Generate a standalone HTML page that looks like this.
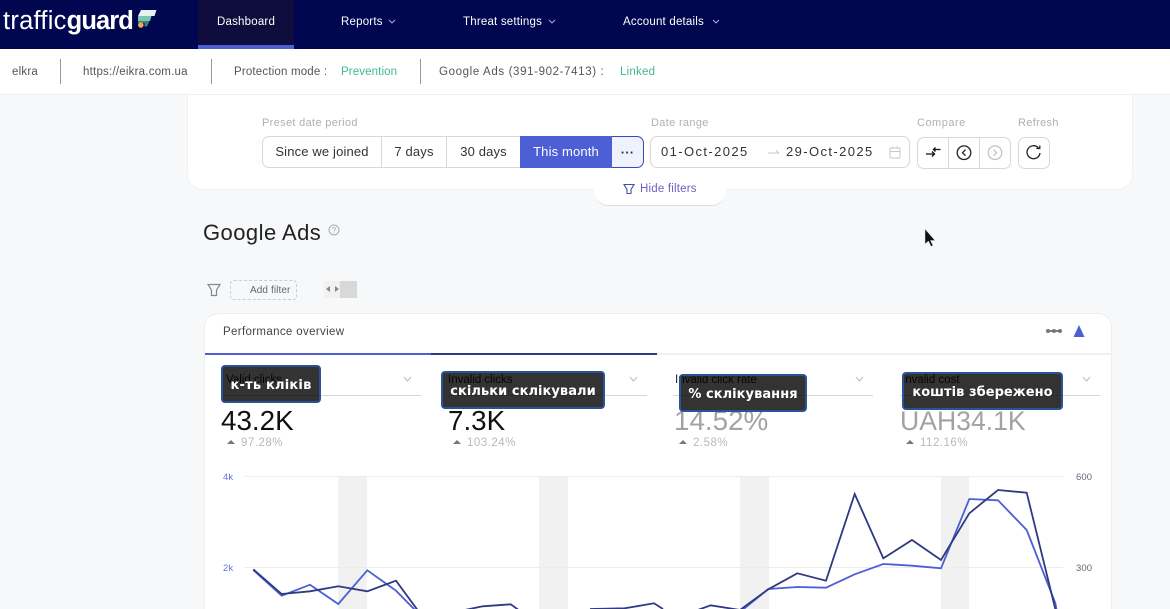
<!DOCTYPE html>
<html><head><meta charset="utf-8">
<style>
html,body{margin:0;padding:0;width:1170px;height:609px;overflow:hidden;background:#f7f8fa;font-family:"Liberation Sans",sans-serif}
#root{position:relative;width:1170px;height:609px;overflow:hidden;background:#f7f8fa}
.a{position:absolute;white-space:nowrap}
.t{position:absolute;white-space:nowrap;line-height:16px}
.nav{color:#fff;font-size:11.5px;top:14px;letter-spacing:.2px}
.sub{font-size:11.5px;color:#555;top:64px;letter-spacing:.22px}
.grn{color:#3fb88f}
.vs{position:absolute;top:59px;width:1px;height:25px;background:#999}
.lbl{font-size:11px;color:#b0b0b0;top:115px;letter-spacing:.33px}
.btn{position:absolute;top:136px;height:32px;box-sizing:border-box;border:1px solid #d8d8d8;background:#fff;font-size:13px;color:#333;line-height:30px;text-align:center;letter-spacing:.15px}
.tip{position:absolute;box-sizing:border-box;background:rgba(0,0,0,.8);border:2px solid #2a5298;border-radius:4px;color:#fff;font:bold 13px "DejaVu Sans",sans-serif;letter-spacing:.05px;text-align:center;line-height:37px;white-space:nowrap;height:38px}
.ml{font-size:11.5px;color:#222;top:372px}
.hr{position:absolute;top:395px;height:1px;background:#d5d5d5}
.val{font-size:27.8px;line-height:30px;top:406px;color:#111}
.pct{font-size:11.5px;color:#b8b8c0;top:435px;letter-spacing:.5px}
.tri{position:absolute;top:440px;width:0;height:0;border-left:4px solid transparent;border-right:4px solid transparent;border-bottom:4px solid #777}
.ax{font-size:9.5px;line-height:12px;letter-spacing:.1px}
</style></head><body><div id="root">
<div class="a" style="left:0;top:0;width:1170px;height:49px;background:#000650"></div>
<div class="a" style="left:198px;top:0;width:96px;height:45px;background:#0e0d3d"></div>
<div class="a" style="left:198px;top:45px;width:96px;height:4px;background:#4c5fd5"></div>
<div class="t" style="left:3px;top:7px;line-height:28px;font-size:25.5px;color:#fff;letter-spacing:.25px">traffic<b style="letter-spacing:-.9px">guard</b></div>
<svg class="a" style="left:136px;top:9px" width="22" height="22" viewBox="0 0 22 22">
<path d="M5 1H20.500L18.500 7H2Z" fill="#e8f0f0"/><path d="M2 7H15.500L14 12H2Z" fill="#7cc6b0"/><path d="M2 12H13.500L11 17.500H8.500V14H2Z" fill="#3f7f80"/><circle cx="4.800" cy="16" r="2.800" fill="#f4a64a"/></svg>
<div class="t nav" style="left:217px">Dashboard</div>
<div class="t nav" style="left:341px">Reports</div>
<div class="t nav" style="left:463px">Threat settings</div>
<div class="t nav" style="left:623px">Account details</div>
<svg class="a" style="left:0;top:0" width="1170" height="49" fill="none" stroke="#b8bbd8" stroke-width=".9"><path d="M389 20l3 3 3-3M549 20l3 3 3-3M713 20l3 3 3-3"/></svg>

<div class="a" style="left:0;top:49px;width:1170px;height:46px;background:#fff;border-bottom:1px solid #f0f0f0;box-sizing:border-box"></div>
<div class="t sub" style="left:12px">elkra</div><div class="vs" style="left:60px"></div>
<div class="t sub" style="left:83px">https://eikra.com.ua</div><div class="vs" style="left:211px"></div>
<div class="t sub" style="left:234px;letter-spacing:.18px">Protection mode :</div><div class="t sub grn" style="left:341px;letter-spacing:.12px">Prevention</div><div class="vs" style="left:420px"></div>
<div class="t sub" style="left:439px;letter-spacing:.63px">Google Ads (391-902-7413) :</div><div class="t sub grn" style="left:620px">Linked</div>

<div class="a" style="left:187px;top:95px;width:946px;height:95px;box-sizing:border-box;background:#fff;border:1px solid #f0f0f2;border-top:0;border-radius:0 0 16px 16px"></div>
<div class="t lbl" style="left:262px">Preset date period</div>
<div class="btn" style="left:262px;width:120px;border-radius:7px 0 0 7px">Since we joined</div>
<div class="btn" style="left:382px;width:65px;border-left:0">7 days</div>
<div class="btn" style="left:447px;width:73px;border-left:0;border-right:0">30 days</div>
<div class="btn" style="left:520px;width:92px;background:#4c5fd5;border-color:#4c5fd5;color:#fff">This month</div>
<div class="btn" style="left:612px;width:32px;background:#eef2fd;border-color:#3a4ab5;border-left:0;border-radius:0 7px 7px 0;line-height:32px;font-weight:bold">···</div>

<div class="t lbl" style="left:651px">Date range</div>
<div class="btn" style="left:650px;width:260px;border-radius:7px"></div>
<div class="t" style="left:661px;top:144px;font-size:13px;color:#333;letter-spacing:1.4px">01-Oct-2025</div>
<div class="t" style="left:786px;top:144px;font-size:13px;color:#333;letter-spacing:1.4px">29-Oct-2025</div>
<svg class="a" style="left:765px;top:145px" width="150" height="16" fill="none" stroke="#c8c8c8"><path d="M3 8H14M11 5.500L14 8"/><rect x="125" y="3" width="10" height="10" rx="1"/><path d="M125 6.500H135M127.500 1.500V4M132.500 1.500V4"/></svg>

<div class="t lbl" style="left:917px;letter-spacing:.5px">Compare</div>
<div class="btn" style="left:917px;width:94px;top:137px;border-radius:7px"></div>
<div class="a" style="left:948px;top:138px;width:1px;height:30px;background:#d8d8d8"></div>
<div class="a" style="left:979px;top:138px;width:1px;height:30px;background:#d8d8d8"></div>
<svg class="a" style="left:917px;top:137px" width="94" height="32" fill="none" stroke-width="1.300">
<path d="M9 17H17.500M15 14.500L17.500 17 15 19.500M23.500 12.500H16.500M18.500 10.500L16.500 12.500 18.500 14.500" stroke="#111"/>
<circle cx="47" cy="15.700" r="6.800" stroke="#222"/><path d="M48.500 12.700L45.500 15.700 48.500 18.700" stroke="#222"/>
<circle cx="78" cy="15.700" r="6.800" stroke="#c4c4c4"/><path d="M76.500 12.700L79.500 15.700 76.500 18.700" stroke="#c4c4c4"/></svg>
<div class="t lbl" style="left:1018px">Refresh</div>
<div class="btn" style="left:1018px;top:137px;width:32px;border-radius:7px"></div>
<svg class="a" style="left:1018px;top:137px" width="32" height="32" fill="none" stroke="#222" stroke-width="1.300"><path d="M20.500 11A6.500 6.500 0 1 0 22 16"/><path d="M21.800 8.500V11.500H18.300"/></svg>

<div class="a" style="left:593px;top:181px;width:134px;height:25px;box-sizing:border-box;background:#fff;border-bottom:1px solid #ddd;border-radius:0 0 16px 16px"></div>
<svg class="a" style="left:623px;top:183px" width="12" height="12" fill="none" stroke="#3f4fb0" stroke-width="1.100"><path d="M1 1.500H11L8 6.500V10.500H4V6.500Z"/></svg>
<div class="t" style="left:640px;top:181px;font-size:11.5px;color:#6a5fc0;letter-spacing:.2px">Hide filters</div>

<div class="t" style="left:203px;top:219px;line-height:28px;font-size:22px;color:#222;letter-spacing:.45px">Google Ads</div>
<svg class="a" style="left:328px;top:224px" width="12" height="12" fill="none" stroke="#aaa"><circle cx="6" cy="6" r="5"/><path d="M4.500 5C4.500 3 7.500 3 7.500 5 7.500 6 6 6 6 7.500M6 8.500V9.500" stroke-width=".8"/></svg>

<svg class="a" style="left:207px;top:283px" width="14" height="14" fill="none" stroke="#888" stroke-width="1.200"><path d="M1 1.500H13L9.500 7V12.500H4.500V7Z"/></svg>
<div class="a" style="left:230px;top:280px;width:67px;height:20px;box-sizing:border-box;border:1px dashed #ccc;border-radius:4px"></div>
<div class="t" style="left:250px;top:283px;font-size:10px;color:#666;letter-spacing:.1px">Add filter</div>
<div class="a" style="left:324px;top:281px;width:16px;height:17px;background:#f1f1f1"></div>
<div class="a" style="left:340px;top:281px;width:17px;height:17px;background:#d8d8d8"></div>
<div class="a" style="left:326px;top:286px;border:3.500px solid transparent;border-left:0;border-right:4px solid #888"></div>
<div class="a" style="left:335px;top:286px;border:3.500px solid transparent;border-right:0;border-left:4px solid #888"></div>

<div class="a" style="left:204px;top:313px;width:908px;height:320px;box-sizing:border-box;background:#fff;border:1px solid #eeeef0;border-radius:14px"></div>
<div class="t" style="left:223px;top:324px;font-size:11.5px;color:#444;letter-spacing:.35px">Performance overview</div>
<div class="a" style="left:205px;top:353px;width:906px;height:2px;background:#efefef"></div>
<div class="a" style="left:205px;top:353px;width:226px;height:2px;background:#4c5fd5"></div>
<div class="a" style="left:431px;top:353px;width:226px;height:2px;background:#2f3a80"></div>
<svg class="a" style="left:1040px;top:320px" width="50" height="20"><path d="M7 11H21" stroke="#777" stroke-width="2"/><circle cx="8" cy="11" r="2" fill="#777"/><circle cx="14" cy="11" r="2" fill="#777"/><circle cx="20" cy="11" r="2" fill="#777"/><path d="M39 5L44.500 17H33.500Z" fill="#4c5fd5"/></svg>

<div class="t ml" style="left:226px">Valid clicks</div>
<div class="t ml" style="left:448px">Invalid clicks</div>
<div class="t ml" style="left:675px">Invalid click rate</div>
<div class="t ml" style="left:902px">Invalid cost</div>
<svg class="a" style="left:0;top:370px" width="1170" height="20" fill="none" stroke="#bbb"><path d="M404 7l3.500 4 3.500-4M630 7l3.500 4 3.500-4M856 7l3.500 4 3.500-4M1083 7l3.500 4 3.500-4"/></svg>
<div class="hr" style="left:222px;width:199px"></div><div class="hr" style="left:448px;width:199px"></div><div class="hr" style="left:673px;width:200px"></div><div class="hr" style="left:900px;width:200px"></div>
<div class="t val" style="left:221px">43.2K</div>
<div class="t val" style="left:448px">7.3K</div>
<div class="t val" style="left:674px;color:#a2a2a2">14.52%</div>
<div class="t val" style="left:900px;color:#a2a2a2;font-size:26.6px">UAH34.1K</div>
<div class="tri" style="left:227px"></div><div class="t pct" style="left:241px">97.28%</div>
<div class="tri" style="left:453px"></div><div class="t pct" style="left:467px">103.24%</div>
<div class="tri" style="left:679px"></div><div class="t pct" style="left:693px">2.58%</div>
<div class="tri" style="left:906px"></div><div class="t pct" style="left:920px">112.16%</div>

<svg class="a" style="left:0;top:0" width="1170" height="609" fill="none">
<g fill="#f1f1f1"><rect x="338" y="476" width="29" height="133"/><rect x="539" y="476" width="29" height="133"/><rect x="740" y="476" width="29" height="133"/><rect x="941" y="476" width="28" height="133"/></g>
<path d="M245 476.500H1063M245 567.500H1063" stroke="#ececee"/>
<path d="M253.300 570L281.700 595.700 310 584.700 338.300 604 367.300 570.300 396 590.700 417 612M740 612L768.300 589 797.300 587 826 587.700 854.700 574.300 883.300 564 912 565.700 941 568.300 969.300 499 998 500.300 1026.700 530 1055.300 603 1057 612" stroke="#4c5fd5" stroke-width="1.800"/>
<path d="M253.300 569.300L281.700 594 310 591.300 338.300 586.300 367.300 591.300 396 580.700 419 612M460 611L482.700 606.300 510.700 604.300 520 611M590 609L624.700 608.300 654 603.300 663 609M695 611L710.700 605.300 740 610 768.300 589.300 797.300 573.300 826 580.700 854.700 494 883.300 558.300 912 540 941 560 969.300 513.300 998 490 1026.700 492.700 1055.300 609" stroke="#2f3a80" stroke-width="1.800"/>
</svg>
<div class="t ax" style="left:223px;top:472px;color:#6a6fd8">4k</div>
<div class="t ax" style="left:223px;top:563px;color:#6a6fd8">2k</div>
<div class="t ax" style="left:1076px;top:472px;color:#667">600</div>
<div class="t ax" style="left:1076px;top:563px;color:#667">300</div>

<div class="tip" style="left:221px;top:365px;width:100px;letter-spacing:.2px">к-ть кліків</div>
<div class="tip" style="left:441px;top:371px;width:164px">скільки склікували</div>
<div class="tip" style="left:679px;top:374px;width:128px">% склікування</div>
<div class="tip" style="left:902px;top:372px;width:161px">коштів збережено</div>

<svg class="a" style="left:922px;top:228px" width="16" height="20"><path d="M3 1V16L6.500 13 9 18.500 11 17.500 8.500 12.500H13Z" fill="#111" stroke="#ddd" stroke-width=".5"/></svg>
</div></body></html>
